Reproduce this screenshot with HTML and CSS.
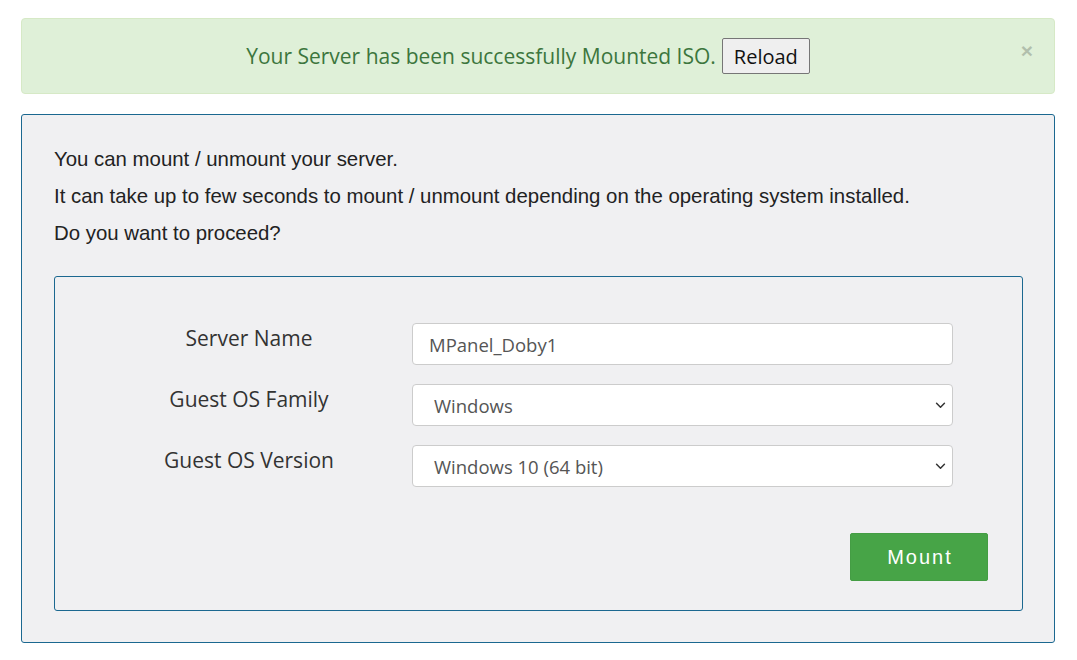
FILE: index.html
```html
<!DOCTYPE html>
<html>
<head>
<meta charset="utf-8">
<link rel="stylesheet" href="styles.css">
</head>
<body>
<div class="page">
  <div class="alert">
    <span class="alert-text">Your Server has been successfully Mounted ISO.</span>
    <button class="reload">Reload</button>
    <span class="close">&times;</span>
  </div>
  <div class="panel">
    <p class="intro">You can mount / unmount your server.</p>
    <p class="intro">It can take up to few seconds to mount / unmount depending on the operating system installed.</p>
    <p class="intro">Do you want to proceed?</p>
    <div class="formbox">
      <div class="form-grid">
        <label class="lbl">Server Name</label>
        <input class="field" type="text" value="MPanel_Doby1">
        <label class="lbl">Guest OS Family</label>
        <div class="select"><span>Windows</span><svg class="chev" viewBox="0 0 12 8" width="11" height="7"><path d="M1.5 1.5 L6 6 L10.5 1.5" fill="none" stroke="#333" stroke-width="1.7" stroke-linecap="round" stroke-linejoin="round"/></svg></div>
        <label class="lbl">Guest OS Version</label>
        <div class="select"><span>Windows 10 (64 bit)</span><svg class="chev" viewBox="0 0 12 8" width="11" height="7"><path d="M1.5 1.5 L6 6 L10.5 1.5" fill="none" stroke="#333" stroke-width="1.7" stroke-linecap="round" stroke-linejoin="round"/></svg></div>
      </div>
      <div class="actions">
        <button class="mount">Mount</button>
      </div>
    </div>
  </div>
</div>
</body>
</html>
```
FILE: styles.css
```css
* { box-sizing: border-box; }
body { margin: 0; background: #fff; }
.page { padding: 18px 22px 0 21px; }

.alert {
  position: relative;
  height: 76px;
  background: #dff0d8;
  border: 1px solid #d6e9c6;
  border-radius: 4px;
  padding: 0 35px 0 15px;
  display: flex;
  align-items: center;
  justify-content: center;
  gap: 6px;
  font-family: "Open Sans", sans-serif;
  font-size: 21px;
  color: #3c763d;
}
.reload {
  font-family: "Open Sans", sans-serif;
  font-size: 20px;
  color: #111;
  background: #efefef;
  border: 1px solid #767676;
  border-radius: 2px;
  height: 36px;
  padding: 0 11px;
}
.close {
  position: absolute;
  right: 21px;
  top: 21px;
  font-family: "Liberation Sans", sans-serif;
  font-size: 21px;
  font-weight: 700;
  line-height: 1;
  color: #000;
  opacity: 0.2;
}

.panel {
  margin-top: 20px;
  background: #f0f0f2;
  border: 1px solid #1b6890;
  border-radius: 3px;
  padding: 26px 31px 31px 32px;
}
.intro {
  margin: 0;
  font-family: "Liberation Sans", Arial, sans-serif;
  font-size: 20.4px;
  line-height: 37px;
  color: #222;
}
.formbox {
  margin-top: 24px;
  border: 1px solid #1b6890;
  border-radius: 3px;
  padding: 46px 34px 29px 40px;
}
.form-grid {
  display: grid;
  grid-template-columns: 308px 541px;
  column-gap: 9px;
  row-gap: 19px;
  align-items: center;
}
.lbl {
  text-align: center;
  font-family: "Open Sans", sans-serif;
  font-size: 21px;
  color: #333;
  position: relative;
  top: -6px;
}
.field, .select {
  height: 42px;
  background: #fff;
  border: 1px solid #ccc;
  border-radius: 4px;
  font-family: "Open Sans", sans-serif;
  font-size: 18.5px;
  color: #555;
}
.field { padding: 0 16px; width: 541px; }
.select {
  display: flex;
  align-items: center;
  justify-content: space-between;
  padding: 0 6px 0 21px;
}
.chev { display: block; }
.actions {
  display: flex;
  justify-content: flex-end;
  margin-top: 46px;
}
.mount {
  width: 138px;
  height: 48px;
  background: #47a447;
  border: 1px solid #449d44;
  border-radius: 2px;
  color: #fff;
  font-family: "Liberation Sans", Arial, sans-serif;
  font-size: 20px;
  letter-spacing: 2px;
  padding: 0 0 0 2px;
}
```
